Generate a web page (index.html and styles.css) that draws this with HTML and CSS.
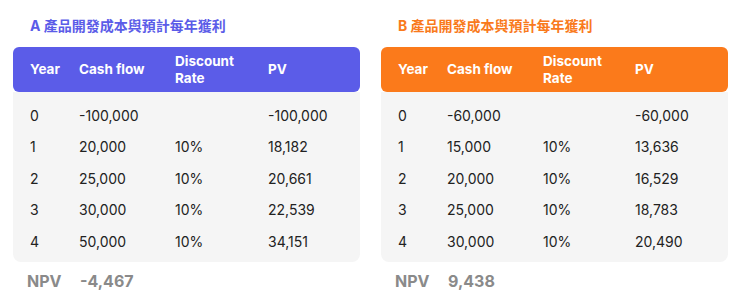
FILE: index.html
```html
<!DOCTYPE html>
<html lang="zh-Hant">
<head>
<meta charset="utf-8">
<link rel="stylesheet" href="styles.css">
</head>
<body>
<div class="wrap">
  <section class="panel panel-a">
    <h2 class="title">A 產品開發成本與預計每年獲利</h2>
    <div class="table">
      <div class="head row">
        <span class="c1">Year</span><span class="c2">Cash flow</span><span class="c3">Discount<br>Rate</span><span class="c4">PV</span>
      </div>
      <div class="body">
        <div class="row"><span class="c1">0</span><span class="c2">-100,000</span><span class="c3"></span><span class="c4">-100,000</span></div>
        <div class="row"><span class="c1">1</span><span class="c2">20,000</span><span class="c3">10%</span><span class="c4">18,182</span></div>
        <div class="row"><span class="c1">2</span><span class="c2">25,000</span><span class="c3">10%</span><span class="c4">20,661</span></div>
        <div class="row"><span class="c1">3</span><span class="c2">30,000</span><span class="c3">10%</span><span class="c4">22,539</span></div>
        <div class="row"><span class="c1">4</span><span class="c2">50,000</span><span class="c3">10%</span><span class="c4">34,151</span></div>
      </div>
    </div>
    <div class="npv"><span class="npv-label">NPV</span><span class="npv-value">-4,467</span></div>
  </section>
  <section class="panel panel-b">
    <h2 class="title">B 產品開發成本與預計每年獲利</h2>
    <div class="table">
      <div class="head row">
        <span class="c1">Year</span><span class="c2">Cash flow</span><span class="c3">Discount<br>Rate</span><span class="c4">PV</span>
      </div>
      <div class="body">
        <div class="row"><span class="c1">0</span><span class="c2">-60,000</span><span class="c3"></span><span class="c4">-60,000</span></div>
        <div class="row"><span class="c1">1</span><span class="c2">15,000</span><span class="c3">10%</span><span class="c4">13,636</span></div>
        <div class="row"><span class="c1">2</span><span class="c2">20,000</span><span class="c3">10%</span><span class="c4">16,529</span></div>
        <div class="row"><span class="c1">3</span><span class="c2">25,000</span><span class="c3">10%</span><span class="c4">18,783</span></div>
        <div class="row"><span class="c1">4</span><span class="c2">30,000</span><span class="c3">10%</span><span class="c4">20,490</span></div>
      </div>
    </div>
    <div class="npv"><span class="npv-label">NPV</span><span class="npv-value">9,438</span></div>
  </section>
</div>
</body>
</html>
```
FILE: styles.css
```css
* { box-sizing: border-box; }
html, body { margin: 0; padding: 0; background: #ffffff; }
body {
  font-family: Inter, "Noto Sans CJK TC", sans-serif;
  color: #222222;
  width: 740px;
  height: 306px;
  overflow: hidden;
}
.wrap {
  display: flex;
  gap: 21px;
  padding-left: 13px;
}
.panel { width: 347px; }
.title {
  margin: 0;
  padding: 17px 0 0 17px;
  height: 47px;
  font-size: 14px;
  line-height: 18px;
  font-weight: 700;
  font-family: Inter, "Noto Sans CJK TC", sans-serif;
}
.panel-a .title { color: #5b5ce8; }
.panel-b .title { color: #f97a1c; }
.row {
  display: flex;
  align-items: center;
  padding-left: 17px;
  font-size: 14px;
}
.c1 { width: 49px; }
.c2 { width: 96px; }
.c3 { width: 93px; }
.c4 { flex: 1; }
.panel-b .c3 { width: 92px; }
.head {
  height: 45px;
  border-radius: 6px;
  color: #ffffff;
  font-weight: 700;
  font-size: 13.5px;
  line-height: 17px;
}
.panel-a .head { background: #5b5ce8; }
.panel-b .head { background: #fb7a1b; }
.body {
  background: #f5f5f5;
  border-radius: 0 0 8px 8px;
  padding: 8px 0 4.5px;
}
.body .row {
  height: 31.5px;
  line-height: 20px;
}
.npv {
  display: flex;
  align-items: center;
  padding-left: 14px;
  margin-top: 9px;
  font-size: 16px;
  font-weight: 700;
  color: #8a8a8a;
}
.npv-label { width: 53px; }
```
